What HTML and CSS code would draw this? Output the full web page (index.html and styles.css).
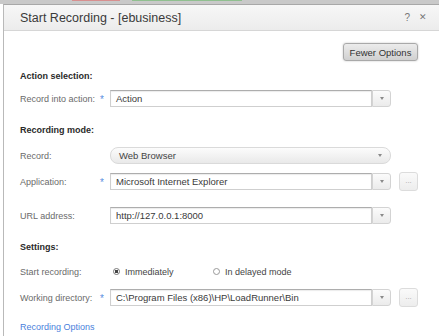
FILE: index.html
```html
<!DOCTYPE html>
<html lang="en">
<head>
  <meta charset="UTF-8">
  <title>Start Recording - [ebusiness]</title>
  <link rel="stylesheet" href="styles.css">
</head>
<body>
  <div class="backdrop"><span class="bg-red"></span><span class="bg-green"></span></div>
  <div class="dialog">
    <div class="title-bar">
      <span class="title">Start Recording - [ebusiness]</span>
      <span class="title-icons"><span>?</span><span class="close">&#x2715;</span></span>
    </div>

    <div class="content">
      <div class="toolbar">
        <button class="btn">Fewer Options</button>
      </div>

      <div class="heading first">Action selection:</div>
      <div class="row r-after-head">
        <span class="label">Record into action:</span>
        <span class="req">*</span>
        <div class="combo"><span class="field">Action</span><span class="drop"><i></i></span></div>
      </div>

      <div class="heading">Recording mode:</div>
      <div class="row r-record">
        <span class="label">Record:</span>
        <span class="req"></span>
        <div class="select">Web Browser<i></i></div>
      </div>
      <div class="row r-tight">
        <span class="label">Application:</span>
        <span class="req">*</span>
        <div class="combo"><span class="field">Microsoft Internet Explorer</span><span class="drop"><i></i></span></div>
        <span class="more">...</span>
      </div>
      <div class="row r-loose">
        <span class="label">URL address:</span>
        <span class="req"></span>
        <div class="combo"><span class="field">http://127.0.0.1:8000</span><span class="drop"><i></i></span></div>
      </div>

      <div class="heading">Settings:</div>
      <div class="row r-radio">
        <span class="label">Start recording:</span>
        <span class="req"></span>
        <label class="radio checked"><span class="dot"></span>Immediately</label>
        <label class="radio"><span class="dot"></span>In delayed mode</label>
      </div>
      <div class="row r-tight">
        <span class="label">Working directory:</span>
        <span class="req">*</span>
        <div class="combo"><span class="field">C:\Program Files (x86)\HP\LoadRunner\Bin</span><span class="drop"><i></i></span></div>
        <span class="more">...</span>
      </div>

      <a class="link" href="#">Recording Options</a>
    </div>
  </div>
</body>
</html>
```

FILE: styles.css
```css
body {
  margin: 0;
  font-family: "Liberation Sans", Arial, sans-serif;
  background: #fff;
  width: 439px;
  height: 336px;
  overflow: hidden;
}
/* window behind the dialog, only its bottom edge shows */
.backdrop {
  height: 4px;
  background: #c9c9c9;
  display: flex;
  align-items: flex-start;
  padding-left: 72px;
}
.bg-red {
  width: 48px;
  height: 1px;
  background: #d89090;
  margin-right: 12px;
}
.bg-green {
  width: 110px;
  height: 1px;
  background: #90c090;
}
.dialog {
  margin-left: 3px;
  border-left: 1px solid #b9b9b9;
  border-top: 1px solid #a8a8a8;
  height: 331px;
}
.title-bar {
  height: 25px;
  display: flex;
  align-items: center;
  justify-content: space-between;
  padding: 0 12px 0 16px;
  background: linear-gradient(#f7f7f7, #ececec);
  border-bottom: 1px solid #d6d6d6;
}
.title {
  font-size: 12.5px;
  color: #3a3a3a;
}
.title-icons {
  font-size: 10px;
  color: #777;
  display: flex;
  gap: 9px;
}
.close {
  font-size: 9px;
}
.content {
  padding: 0 21px 0 16px;
  font-size: 9px;
  color: #6a6a6a;
}
.toolbar {
  display: flex;
  justify-content: flex-end;
  padding-top: 12px;
}
.btn {
  height: 18px;
  width: 75px;
  padding: 0;
  font-family: inherit;
  font-size: 9.5px;
  color: #333;
  border: 1px solid #a9a9a9;
  border-radius: 3px;
  background: linear-gradient(#ececec, #d0d0d0);
  box-shadow: 0 0 2px rgba(0,0,0,0.25);
}
.heading {
  font-weight: bold;
  color: #2a2a2a;
  height: 12px;
  line-height: 12px;
  margin-top: 17px;
}
.heading.first {
  margin-top: 9px;
}
.row {
  display: flex;
  align-items: center;
  height: 17px;
  margin-top: 9px;
}
.r-after-head { margin-top: 8px; }
.r-record { margin-top: 11px; }
.r-loose { margin-top: 17px; }
.r-radio { margin-top: 10px; }
.label {
  width: 80px;
  flex: none;
  white-space: nowrap;
}
.req {
  width: 10px;
  flex: none;
  color: #5b8fe0;
  font-size: 10px;
  line-height: 10px;
  padding-top: 3px;
  box-sizing: border-box;
}
.combo {
  display: flex;
  height: 17px;
}
.field {
  width: 262px;
  box-sizing: border-box;
  border: 1px solid #cfcfcf;
  border-top-color: #adadad;
  box-shadow: inset 0 1px 1px rgba(0,0,0,0.08);
  background: #fff;
  color: #3a3a3a;
  font-size: 9.5px;
  padding-left: 5px;
  line-height: 15px;
  white-space: nowrap;
  overflow: hidden;
}
.drop {
  width: 19px;
  box-sizing: border-box;
  border: 1px solid #d3d3d3;
  border-radius: 0 3px 3px 0;
  background: linear-gradient(#fbfbfb, #ebebeb);
  display: flex;
  align-items: center;
  justify-content: center;
}
.drop i,
.select i {
  width: 0;
  height: 0;
  border-left: 2.5px solid transparent;
  border-right: 2.5px solid transparent;
  border-top: 3px solid #8a8a8a;
}
.select {
  width: 281px;
  height: 17px;
  box-sizing: border-box;
  border: 1px solid #dadada;
  border-radius: 8px;
  background: linear-gradient(#fcfcfc, #e9e9e9);
  color: #444;
  font-size: 9.5px;
  padding: 0 8px;
  display: flex;
  align-items: center;
  justify-content: space-between;
}
.more {
  width: 19px;
  height: 19px;
  margin-left: 8px;
  box-sizing: border-box;
  border: 1px solid #dcdcdc;
  border-radius: 3px;
  background: linear-gradient(#fafafa, #ededed);
  color: #aaa;
  font-size: 8px;
  text-align: center;
  line-height: 15px;
}
.radio {
  display: flex;
  align-items: center;
  width: 100px;
  color: #444;
}
.dot {
  width: 7px;
  height: 7px;
  box-sizing: border-box;
  border: 1px solid #999;
  border-radius: 50%;
  margin: 0 5px 0 3px;
  background: #fff;
}
.radio.checked .dot {
  background: radial-gradient(#444 0 1.6px, #fff 2px);
  border-color: #777;
}
.link {
  display: block;
  margin-top: 15px;
  color: #4a7fdc;
  text-decoration: none;
  line-height: 12px;
}
```
